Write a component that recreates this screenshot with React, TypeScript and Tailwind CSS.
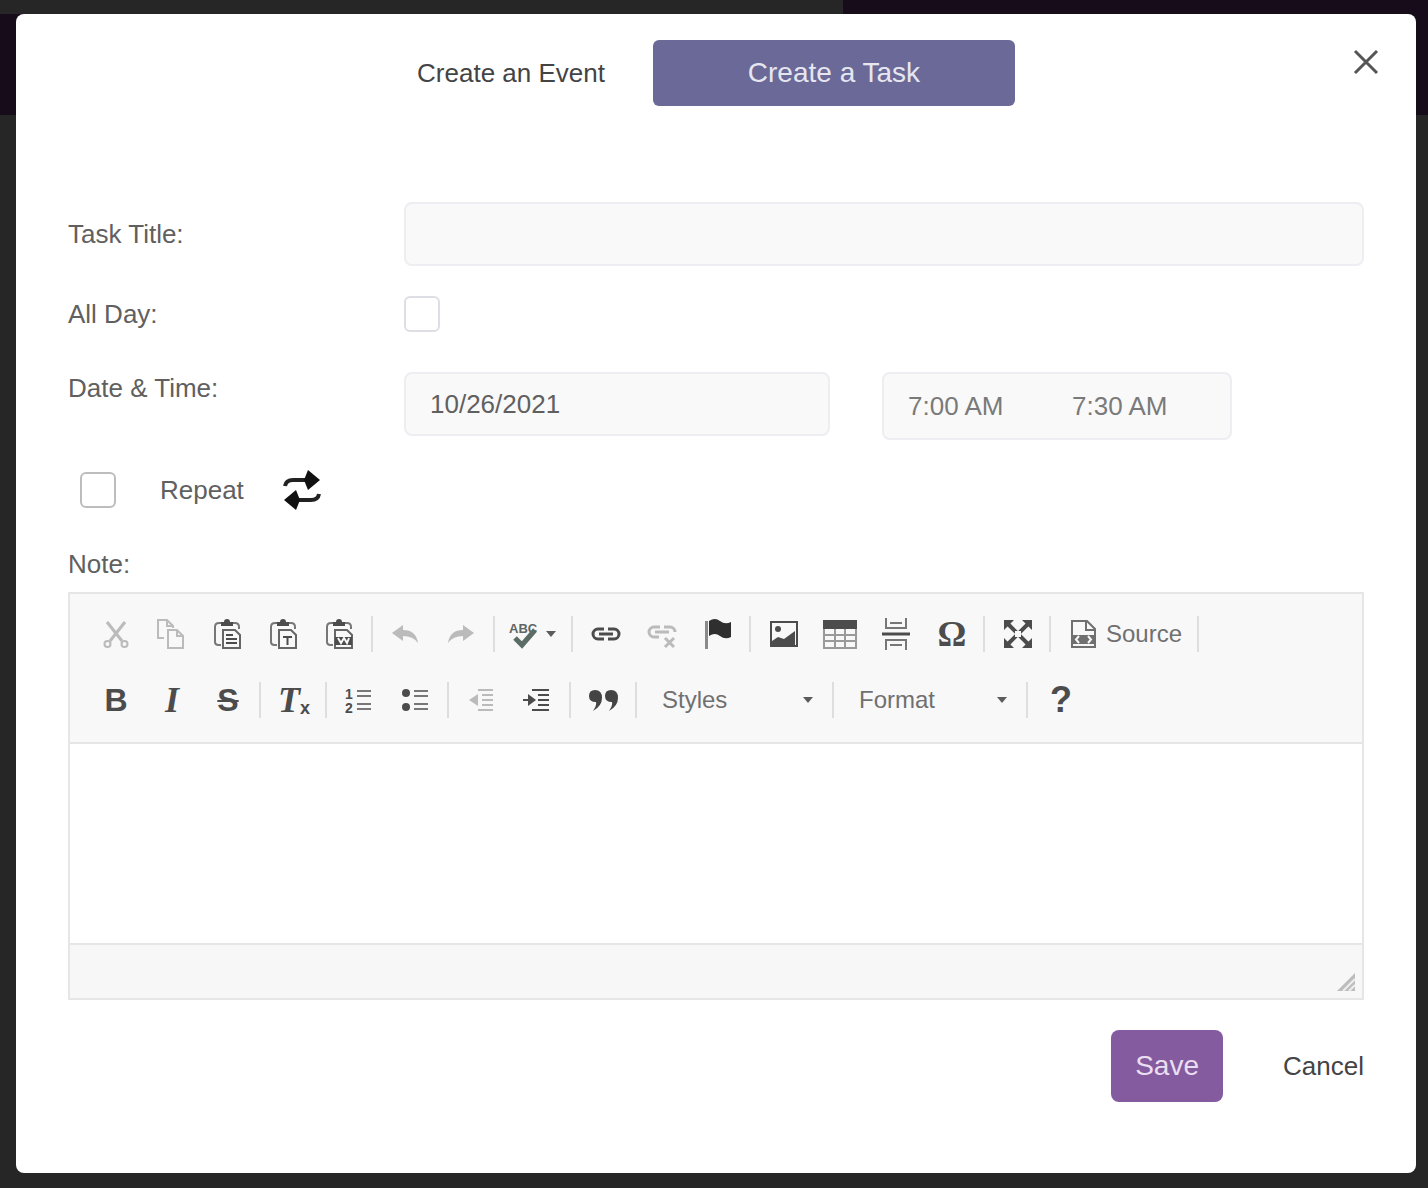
import React, { useState } from 'react'

type ToolProps = {
  label: string
  disabled?: boolean
  children: React.ReactNode
}

//single toolbar button
function Tool({ label, disabled, children }: ToolProps) {
  return (
    <button
      type="button"
      title={label}
      aria-label={label}
      disabled={disabled}
      className="flex h-12 w-14 items-center justify-center text-[#4c4c4c] disabled:opacity-35"
    >
      {children}
    </button>
  )
}

//32px icon canvas
function Icon({ children }: { children: React.ReactNode }) {
  return (
    <svg
      viewBox="0 0 32 32"
      className="h-8 w-8"
      fill="none"
      stroke="currentColor"
      strokeWidth="2"
      aria-hidden="true"
    >
      {children}
    </svg>
  )
}

//thin line between groups
function Separator() {
  return <span className="ml-[3px] mr-[5px] h-9 w-0.5 bg-[#dedede]" />
}

//small down triangle
function Caret() {
  return (
    <svg viewBox="0 0 10 6" className="h-1.5 w-2.5" aria-hidden="true">
      <path d="M0 0h10L5 6z" fill="#5c5c5c" />
    </svg>
  )
}

//clipboard shared by the three paste buttons
function Clipboard({ children }: { children?: React.ReactNode }) {
  return (
    <Icon>
      <path d="M9 27H6.500Q3 27 3 24V9Q3 5 7 5h3M21 5h2q4 0 4 4v2" stroke="#777" />
      <path d="M9 8V4h3q0-3 3-3t3 3h3v4z" fill="currentColor" stroke="none" />
      <path d="M11 12h12l5 5v13H11z" fill="#f8f8f8" stroke="#666" />
      {children}
    </Icon>
  )
}

type ComboProps = {
  name: string
  className: string
}

function Combo({ name, className }: ComboProps) {
  return (
    <div className={className}>
      <select
        aria-label={name}
        className="h-12 w-full appearance-none bg-transparent pl-5 text-2xl text-[#707070] outline-none"
      >
        <option>{name}</option>
      </select>
      <span className="pointer-events-none absolute inset-y-0 right-4 flex items-center">
        <Caret />
      </span>
    </div>
  )
}

function Toolbar() {
  return (
    <div className="border-b-2 border-[#e6e6e6] bg-[#f8f8f8] px-[18px] pt-[7px] pb-[9px]">
      <div className="flex h-[66px] items-center">
        <Tool label="Cut" disabled>
          <Icon>
            <path d="M7 4l15 19M25 4L10 23" strokeWidth="3" />
            <circle cx="7.500" cy="26" r="3" />
            <circle cx="24.500" cy="26" r="3" />
          </Icon>
        </Tool>
        <Tool label="Copy" disabled>
          <Icon>
            <path d="M8 20H2V2h9l6 6v2" />
            <path d="M11 2v6h6M12 12h9l6 6v12H12z" />
            <path d="M21 12v6h6" />
          </Icon>
        </Tool>
        <Tool label="Paste">
          <Clipboard>
            <path d="M14 17h7M14 21h11M14 25h11" />
          </Clipboard>
        </Tool>
        <Tool label="Paste as plain text">
          <Clipboard>
            <path d="M15 19h9M19.500 19v8" />
          </Clipboard>
        </Tool>
        <Tool label="Paste from Word">
          <Clipboard>
            <path d="M11 19h17v8H11z" fill="currentColor" stroke="none" />
            <path d="M14 20l3 5 3-5 3 5 2-5" stroke="#f8f8f8" />
          </Clipboard>
        </Tool>
        <Separator />
        <Tool label="Undo" disabled>
          <Icon>
            <path d="M2 15l11-8v5q13 0 15 13-5-7-15-7v5z" fill="currentColor" stroke="none" />
          </Icon>
        </Tool>
        <Tool label="Redo" disabled>
          <Icon>
            <path d="M28 15L17 7v5Q4 12 2 25q5-7 15-7v5z" fill="currentColor" stroke="none" />
          </Icon>
        </Tool>
        <Separator />
        <button
          type="button"
          aria-label="Spell check"
          className="flex h-12 w-[68px] items-center gap-1.5 pl-2 text-[#4c4c4c]"
        >
          <svg viewBox="0 0 32 32" className="h-8 w-8" fill="none" aria-hidden="true">
            <text x="1" y="15" fontSize="13" fontWeight="bold" fontFamily="Liberation Sans, sans-serif" fill="#5d6664">
              ABC
            </text>
            <path d="M7 20l7 7L27 12" stroke="#5b6b65" strokeWidth="5" />
          </svg>
          <Caret />
        </button>
        <Separator />
        <Tool label="Link">
          <Icon>
            <path d="M14 11H8a5 5 0 0 0 0 10h6M18 11h6a5 5 0 0 1 0 10h-6M9 16h14" strokeWidth="3" />
          </Icon>
        </Tool>
        <Tool label="Unlink" disabled>
          <Icon>
            <path d="M14 9H8a5 5 0 0 0 0 10h5M18 9h6a5 5 0 0 1 5 5M9 14h14" strokeWidth="3" />
            <path d="M19 20l9 9M28 20l-9 9" strokeWidth="3" />
          </Icon>
        </Tool>
        <Tool label="Anchor">
          <svg viewBox="0 0 32 32" className="h-8 w-8" aria-hidden="true">
            <path d="M3 3h3v28H3z" fill="#8a8a8a" />
            <path d="M7 3q6-4 11 0t11 1v15q-6 3-11-1T7 18z" fill="#2f2f2f" />
          </svg>
        </Tool>
        <Separator />
        <Tool label="Image">
          <Icon>
            <path d="M3 4h26v24H3z" />
            <circle cx="10" cy="11" r="3" fill="currentColor" stroke="none" />
            <path d="M4 23l6-4 6 2 11-8v14H4z" fill="currentColor" stroke="none" />
          </Icon>
        </Tool>
        <Tool label="Table">
          <svg viewBox="0 0 34 32" className="h-8 w-[34px]" fill="none" aria-hidden="true">
            <path d="M1 10v20h32V10M1 17h32M1 23h32M12 10v20M22 10v20" stroke="#9a9a9a" strokeWidth="2" />
            <path d="M0 2h34v9H0z" fill="#4c4c4c" />
          </svg>
        </Tool>
        <Tool label="Insert horizontal line">
          <Icon>
            <path d="M6 0v10h20V0M6 32V22h20v10M10 5h12M10 27h12" stroke="#777" />
            <path d="M2 16h28" strokeWidth="3" />
          </Icon>
        </Tool>
        <Tool label="Insert special character">
          <span className="font-['Liberation_Serif',serif] text-4xl font-bold">Ω</span>
        </Tool>
        <Separator />
        <Tool label="Maximize">
          <Icon>
            <path d="M5 5l22 22M27 5L5 27" strokeWidth="4" />
            <path
              d="M2 2h10L2 12zM30 2v10L20 2zM2 30V20l10 10zM30 30H20l10-10z"
              fill="currentColor"
              stroke="none"
            />
            <path d="M13 13h6v6h-6z" fill="#f8f8f8" stroke="none" />
          </Icon>
        </Tool>
        <Separator />
        <button
          type="button"
          className="flex h-12 w-[138px] items-center gap-1.5 pl-3 text-2xl text-[#707070]"
        >
          <Icon>
            <path d="M4 3h15l8 8v18H4z" />
            <path d="M18 3v9h9" />
            <path d="M4 17h23v9H4z" fill="currentColor" stroke="none" />
            <path d="M11 18l-3 3.500 3 3.500M20 18l3 3.500-3 3.500" stroke="#f8f8f8" />
          </Icon>
          Source
        </button>
        <Separator />
      </div>

      <div className="flex h-[66px] items-center">
        <Tool label="Bold">
          <span className="text-[32px] font-bold">B</span>
        </Tool>
        <Tool label="Italic">
          <span className="font-['Liberation_Serif',serif] text-4xl font-bold italic">I</span>
        </Tool>
        <Tool label="Strikethrough">
          <span className="text-[32px] font-bold line-through decoration-2">S</span>
        </Tool>
        <Separator />
        <Tool label="Remove format">
          <span className="font-['Liberation_Serif',serif] text-4xl font-bold italic">T</span>
          <span className="pt-4 text-lg font-bold">x</span>
        </Tool>
        <Separator />
        <Tool label="Numbered list">
          <svg viewBox="0 0 32 32" className="h-8 w-8" aria-hidden="true">
            <g fontSize="14" fontWeight="bold" fontFamily="Liberation Sans, sans-serif" fill="#4c4c4c">
              <text x="1" y="15">1</text>
              <text x="1" y="29">2</text>
            </g>
            <path d="M13 7h14M13 12h14M13 20h14M13 25h14" stroke="#777" strokeWidth="2" />
          </svg>
        </Tool>
        <Tool label="Bulleted list">
          <svg viewBox="0 0 32 32" className="h-8 w-8" aria-hidden="true">
            <circle cx="6" cy="9" r="4" fill="#4c4c4c" />
            <circle cx="6" cy="23" r="4" fill="#4c4c4c" />
            <path d="M14 7h14M14 12h14M14 20h14M14 25h14" stroke="#777" strokeWidth="2" />
          </svg>
        </Tool>
        <Separator />
        <Tool label="Decrease indent" disabled>
          <Icon>
            <path d="M12 6h15M16 11h11M16 16h11M16 21h11M12 26h15" />
            <path d="M12 10v12l-9-6z" fill="currentColor" stroke="none" />
          </Icon>
        </Tool>
        <Tool label="Increase indent">
          <Icon>
            <path d="M10 6h17M16 11h11M16 16h11M16 21h11M10 26h17" />
            <path d="M1 16h6" />
            <path d="M6 10v12l8-6z" fill="currentColor" stroke="none" />
          </Icon>
        </Tool>
        <Separator />
        <Tool label="Block quote">
          <svg viewBox="0 0 32 32" className="h-8 w-8" fill="#444" aria-hidden="true">
            <path d="M7 6q7 0 7 8 0 8-9 13 4-6 3-9-7 0-7-6t6-6zM23 6q7 0 7 8 0 8-9 13 4-6 3-9-7 0-7-6t6-6z" />
          </svg>
        </Tool>
        <Separator />
        <Combo name="Styles" className="relative w-[187px]" />
        <Separator />
        <Combo name="Format" className="relative w-[184px]" />
        <Separator />
        <Tool label="About">
          <span className="text-4xl font-bold">?</span>
        </Tool>
      </div>
    </div>
  )
}

function App() {
  const [title, setTitle] = useState('')
  const [date, setDate] = useState('10/26/2021')
  const [start, setStart] = useState('7:00 AM')
  const [end, setEnd] = useState('7:30 AM')
  const [note, setNote] = useState('')

  return (
    <div className="relative min-h-screen bg-[#262626] pt-[14px] pr-3 pb-[15px] pl-4 font-['Liberation_Sans',Arial,sans-serif]">
      {/* page header behind the dialog */}
      <div className="absolute inset-x-0 top-0 h-[115px] bg-[#160c1a]">
        <div className="h-[14px] w-[59%] bg-[#262626]" />
      </div>

      <div role="dialog" aria-label="Create a Task" className="relative rounded-lg bg-white px-[52px] pt-[26px] pb-[71px]">
        <button type="button" aria-label="Close" className="absolute top-[34px] right-9">
          <svg viewBox="0 0 28 28" className="h-7 w-7" fill="none" stroke="#555" strokeWidth="3" aria-hidden="true">
            <path d="M3 3l22 22M25 3L3 25" />
          </svg>
        </button>

        <div className="flex items-center justify-center gap-12">
          <button type="button" className="text-[26px] text-[#444]">Create an Event</button>
          <button type="button" className="h-[66px] w-[362px] rounded-md bg-[#6a6997] text-[28px] text-[#e6e6f0]">
            Create a Task
          </button>
        </div>

        <form className="pt-24 text-[26px] leading-8 text-[#606060]" onSubmit={(e) => e.preventDefault()}>
          <div className="flex items-center">
            <label htmlFor="title" className="w-[336px] shrink-0">Task Title:</label>
            <input
              id="title"
              type="text"
              value={title}
              onChange={(e) => setTitle(e.target.value)}
              className="h-16 w-full rounded-lg border-2 border-[#ededf2] bg-[#f9f9f9] px-6 outline-none"
            />
          </div>

          <div className="mt-[30px] flex items-center">
            <label htmlFor="allDay" className="w-[336px] shrink-0">All Day:</label>
            <input
              id="allDay"
              type="checkbox"
              className="h-9 w-9 appearance-none rounded-md border-2 border-[#dedee5] bg-white"
            />
          </div>

          <div className="mt-10 flex items-start">
            <label htmlFor="date" className="w-[336px] shrink-0">Date &amp; Time:</label>
            <div className="flex w-full gap-[52px]">
              <input
                id="date"
                type="text"
                value={date}
                onChange={(e) => setDate(e.target.value)}
                className="h-16 w-full max-w-[426px] rounded-lg border-2 border-[#ededf2] bg-[#f9f9f9] px-6 outline-none"
              />
              <div className="flex h-[68px] w-full max-w-[350px] rounded-lg border-2 border-[#ededf2] bg-[#f9f9f9] px-6 text-[#7a7a7a]">
                <input
                  aria-label="Start time"
                  type="text"
                  value={start}
                  onChange={(e) => setStart(e.target.value)}
                  className="w-[164px] outline-none"
                />
                <input
                  aria-label="End time"
                  type="text"
                  value={end}
                  onChange={(e) => setEnd(e.target.value)}
                  className="min-w-0 flex-1 outline-none"
                />
              </div>
            </div>
          </div>

          <div className="mt-[30px] flex items-center pl-3">
            <input
              id="repeat"
              type="checkbox"
              className="h-9 w-9 appearance-none rounded-md border-2 border-[#bdbdbd] bg-white"
            />
            <label htmlFor="repeat" className="ml-11">Repeat</label>
            <svg viewBox="0 0 40 40" className="ml-[38px] h-10 w-10" aria-hidden="true">
              <path d="M3 16q1-6 8-6h14M37 24q-1 6-8 6H15" fill="none" stroke="#222" strokeWidth="4" />
              <path d="M26 0l12 10-12 10-4-10zM14 20L2 30l12 10 4-10z" fill="#111" />
            </svg>
          </div>

          <label htmlFor="note" className="mt-[38px] block">Note:</label>
          <div className="mt-3 border-2 border-[#e6e6e6]">
            <Toolbar />
            <textarea
              id="note"
              value={note}
              onChange={(e) => setNote(e.target.value)}
              className="block h-[199px] w-full resize-none bg-white p-5 outline-none"
            />
            <div className="flex h-[55px] items-end justify-end border-t-2 border-[#e6e6e6] bg-[#f7f7f7] p-1.5">
              <svg viewBox="0 0 20 20" className="h-5 w-5" aria-hidden="true">
                <path d="M19 1v18H1z" fill="#bdbdbd" />
                <path d="M7 19L19 7M13 19l6-6" stroke="#eee" strokeWidth="2" />
              </svg>
            </div>
          </div>

          <div className="mt-[30px] flex items-center justify-end gap-[60px]">
            <button type="submit" className="h-[72px] w-28 rounded-lg bg-[#855b9f] text-[28px] text-[#eadff0]">
              Save
            </button>
            <button type="button" className="text-[#444]">Cancel</button>
          </div>
        </form>
      </div>
    </div>
  )
}

export default App
